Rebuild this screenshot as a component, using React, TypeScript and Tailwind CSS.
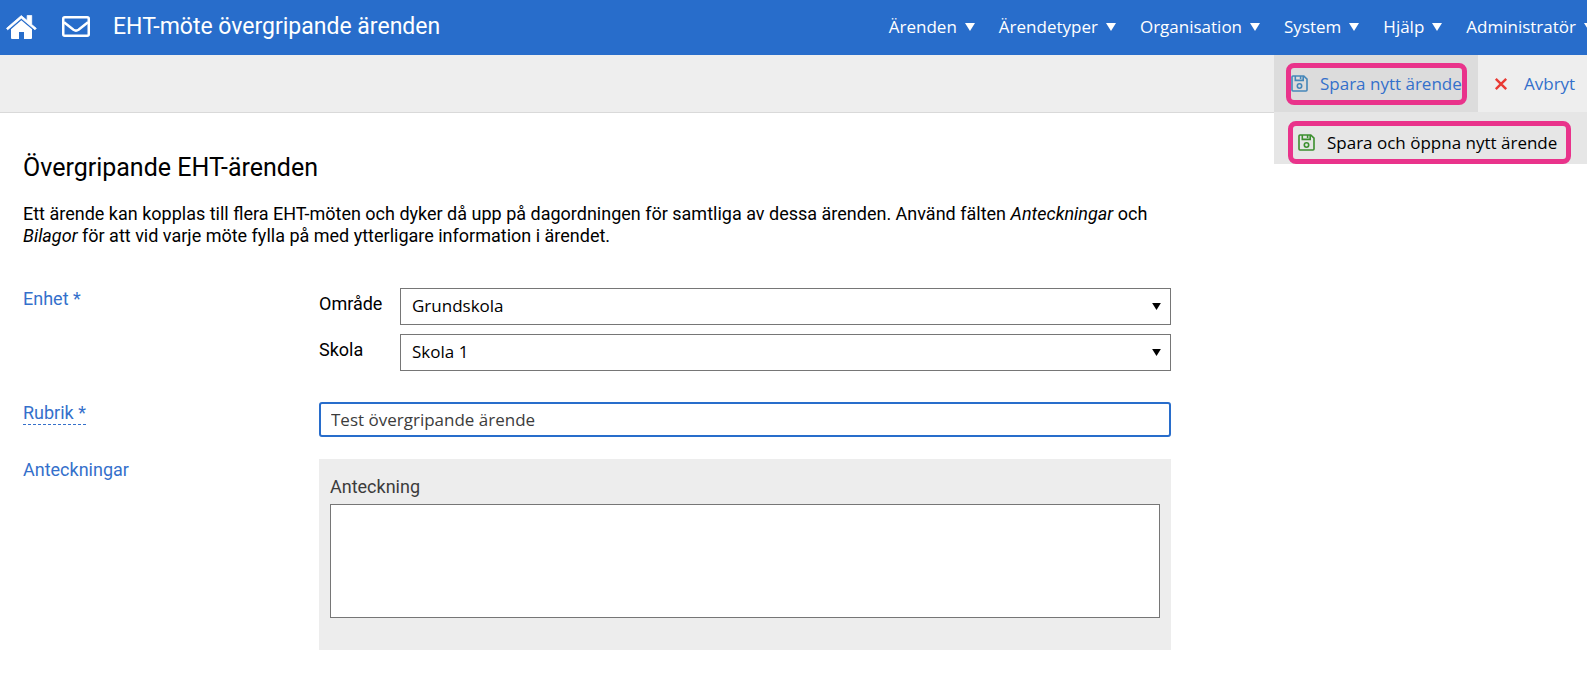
import { useState } from 'react';
import type { ReactNode } from 'react';

const MENU_ITEMS = ['Ärenden', 'Ärendetyper', 'Organisation', 'System', 'Hjälp', 'Administratör'];

function HomeIcon() {
  return (
    <svg className="h-6 w-[31px]" viewBox="0 0 31 24" fill="currentColor" aria-hidden="true">
      <path
        d="M15.3.6 21.2 5.6V.4h4.5v9.1l4.6 3.8-1.3 1.5L15.3 3.2 1.7 14.8.5 13.3z"
        stroke="currentColor"
        strokeWidth="0.8"
        strokeLinejoin="round"
      />
      <path d="M15.3 5.2 26 14.2V23q0 1-1 1h-7v-7h-5v7H6q-1 0-1-1v-8.8z" />
    </svg>
  );
}

function MailIcon() {
  return (
    <svg className="h-[21px] w-7" viewBox="0 0 28 21" fill="none" stroke="currentColor" strokeWidth="2.5" aria-hidden="true">
      <rect x="1.25" y="1.25" width="25.5" height="18.5" rx="1.5" />
      <path d="m2 6.2 9.5 7.5q2.5 1.8 5 0L26 6.2" />
    </svg>
  );
}

function SaveIcon({ className }: { className: string }) {
  return (
    <svg className={className} viewBox="0 0 17 17" fill="none" stroke="currentColor" strokeWidth="1.6" aria-hidden="true">
      <path d="M2 1h10.8L16 4.2V15q0 1-1 1H2q-1 0-1-1V2q0-1 1-1z" />
      <path d="M4.3 1v4.4h7.9V1M9.6 1v3" />
      <circle cx="8.5" cy="11" r="2.2" />
    </svg>
  );
}

function CrossIcon() {
  return (
    <svg className="size-[14px] text-[#e93a34]" viewBox="0 0 14 14" stroke="currentColor" strokeWidth="2.4" aria-hidden="true">
      <path d="m1.8 1.8 10.4 10.4M12.2 1.8 1.8 12.2" />
    </svg>
  );
}

function Caret({ className }: { className: string }) {
  return (
    <svg className={className} viewBox="0 0 10 8" fill="currentColor" aria-hidden="true">
      <path d="M0 0h10L5 8z" />
    </svg>
  );
}

function TopBar() {
  return (
    <header className="flex h-[55px] items-center overflow-hidden bg-[#286dcb] pb-0.5 text-white">
      <a href="#hem" aria-label="Hem" className="ml-[6px]">
        <HomeIcon />
      </a>
      <a href="#meddelanden" aria-label="Meddelanden" className="ml-[25px]">
        <MailIcon />
      </a>
      <span className="ml-[23px] whitespace-nowrap text-[23px] leading-7">EHT-möte övergripande ärenden</span>
      <nav className="-mr-[7px] ml-auto flex gap-6 font-['Open_Sans',sans-serif] text-[17px]">
        {MENU_ITEMS.map((item) => (
          <button key={item} type="button" className="flex shrink-0 items-center gap-2">
            {item}
            <Caret className="h-2 w-[10px]" />
          </button>
        ))}
      </nav>
    </header>
  );
}

function ActionBar() {
  return (
    <div className="flex h-[58px] justify-end border-b border-[#d9d9d9] bg-[#eeeeee] font-['Open_Sans',sans-serif] text-[17px] text-[#3470cb]">
      <div className="relative flex w-[313px]">
        <div className="flex w-[204px] items-center bg-[#dcdcdc] pl-3">
          <button
            type="button"
            className="flex h-[42px] w-[181px] items-center gap-3 whitespace-nowrap rounded-lg border-[5px] border-[#e9338b]"
          >
            <SaveIcon className="size-[17px] shrink-0 text-[#4587b9]" />
            Spara nytt ärende
          </button>
        </div>
        <button type="button" className="flex items-center gap-4 pl-4">
          <CrossIcon />
          Avbryt
        </button>
        <div className="absolute left-0 top-full flex h-[52px] w-full items-end bg-[#e6e6e6] pl-[14px]">
          <button
            type="button"
            className="flex h-[43px] w-[283px] items-center gap-3 whitespace-nowrap rounded-lg border-[5px] border-[#e9338b] pl-[5px] text-black"
          >
            <SaveIcon className="size-[17px] shrink-0 text-[#3c8f2f]" />
            Spara och öppna nytt ärende
          </button>
        </div>
      </div>
    </div>
  );
}

function SelectRow({ id, label, value }: { id: string; label: string; value: string }) {
  return (
    <div className="flex">
      <label htmlFor={id} className="w-[81px] pt-[5px]">
        {label}
      </label>
      <div className="relative flex-1">
        <select
          id={id}
          defaultValue={value}
          className="block h-[37px] w-full appearance-none border border-[#767676] bg-white pb-0.5 pl-[11px] font-['Open_Sans',sans-serif] text-[17px]"
        >
          <option>{value}</option>
        </select>
        <Caret className="pointer-events-none absolute right-[10px] top-[15px] h-[7px] w-[9px]" />
      </div>
    </div>
  );
}

function FieldRow({ label, children }: { label: ReactNode; children: ReactNode }) {
  return (
    <div className="flex">
      <div className="w-[296px] shrink-0 text-[#3470cb]">{label}</div>
      <div className="min-w-0 flex-1">{children}</div>
    </div>
  );
}

export default function App() {
  const [title, setTitle] = useState('Test övergripande ärende');

  return (
    <div className="min-h-screen bg-white font-[Roboto,sans-serif] text-[18px] leading-[22px] text-black">
      <TopBar />
      <ActionBar />
      <main className="max-w-[1171px] pl-[23px] pt-[41px]">
        <h1 className="text-[25px] leading-7">Övergripande EHT-ärenden</h1>
        <p className="mt-[21px]">
          Ett ärende kan kopplas till flera EHT-möten och dyker då upp på dagordningen för samtliga av dessa
          ärenden. Använd fälten <em>Anteckningar</em> och <em>Bilagor</em> för att vid varje möte fylla på med
          ytterligare information i ärendet.
        </p>

        <form className="mt-[41px]" onSubmit={(e) => e.preventDefault()}>
          <FieldRow label={<span>Enhet *</span>}>
            <div className="flex flex-col gap-[9px]">
              <SelectRow id="omrade" label="Område" value="Grundskola" />
              <SelectRow id="skola" label="Skola" value="Skola 1" />
            </div>
          </FieldRow>
          <div className="mt-[31px]">
            <FieldRow
              label={
                <label htmlFor="rubrik" className="border-b border-dashed border-[#3470cb] pb-px">
                  Rubrik *
                </label>
              }
            >
              <input
                id="rubrik"
                type="text"
                value={title}
                onChange={(e) => setTitle(e.target.value)}
                className="block h-[35px] w-full rounded-[3px] border-2 border-[#286dcb] pl-[10px] font-['Open_Sans',sans-serif] text-[17px] text-[#3c3c3c] outline-none"
              />
            </FieldRow>
          </div>
          <div className="mt-[22px]">
            <FieldRow label={<span>Anteckningar</span>}>
              <div className="bg-[#ededed] px-[11px] pb-8 pt-[17px] text-[#3c3c3c]">
                <label htmlFor="anteckning">Anteckning</label>
                <textarea
                  id="anteckning"
                  className="mt-[6px] block h-[114px] w-full resize-none border border-[#767676] bg-white p-2 text-black outline-none"
                />
              </div>
            </FieldRow>
          </div>
        </form>
      </main>
    </div>
  );
}
